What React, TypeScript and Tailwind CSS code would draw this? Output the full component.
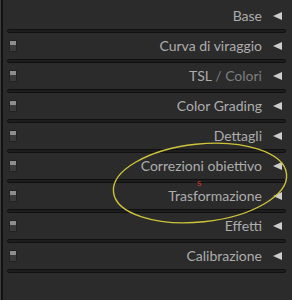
import type { ReactNode } from 'react';

type Panel = {
  label: ReactNode;
  toggle: boolean;
};

const PANELS: Panel[] = [
  { label: 'Base', toggle: false },
  { label: 'Curva di viraggio', toggle: true },
  {
    label: (
      <>
        TSL<span className="text-[#7e7e7e]"> / Colori</span>
      </>
    ),
    toggle: true,
  },
  { label: 'Color Grading', toggle: true },
  { label: 'Dettagli', toggle: true },
  { label: 'Correzioni obiettivo', toggle: true },
  { label: 'Trasformazione', toggle: true },
  { label: 'Effetti', toggle: true },
  { label: 'Calibrazione', toggle: true },
];

function Toggle() {
  return (
    <div className="flex h-[12px] w-[8px] flex-col overflow-hidden rounded-[1px] border border-[#222] bg-[#3b3b3b]">
      <div className="h-[4px] bg-[#8e8e8e]" />
    </div>
  );
}

function Collapse() {
  return (
    <svg width="9" height="8" viewBox="0 0 9 8" className="shrink-0">
      <path d="M0 4 L9 0 L9 8 Z" fill="#cdcdcd" />
    </svg>
  );
}

function PanelRow({ panel }: { panel: Panel }) {
  return (
    <div className="flex flex-col">
      <div className="flex h-[26px] items-center pl-[9px] pr-[10px]">
        {panel.toggle ? <Toggle /> : null}
        <span className="ml-auto mr-[11px] text-[14px] leading-none text-[#adadad]">{panel.label}</span>
        <Collapse />
      </div>
      <div className="ml-[7px] mr-[6px] h-[4px] rounded-[2px] border border-[#101010] bg-[#1e1e1e]" />
    </div>
  );
}

export default function App() {
  return (
    <div
      className="relative flex h-[300px] w-[292px] overflow-hidden bg-[#2b2b2b]"
      style={{ fontFamily: 'Lato, "Open Sans", sans-serif' }}
    >
      <div className="h-full w-[1px] bg-[#3d3d3d]" />
      <div className="h-full w-[2px] bg-[#121212]" />
      <div className="-ml-[3px] flex flex-1 flex-col pt-[3px]">
        {PANELS.map((p, i) => (
          <PanelRow key={i} panel={p} />
        ))}
      </div>

      {/* annotation drawn over the screenshot */}
      <svg className="pointer-events-none absolute left-0 top-0" width="292" height="300">
        <ellipse
          cx="200"
          cy="183"
          rx="87"
          ry="39"
          transform="rotate(-6 200 183)"
          fill="none"
          stroke="#cdc43a"
          strokeWidth="1.4"
        />
      </svg>
      <span className="absolute left-[197px] top-[177px] text-[10px] leading-none text-[#d63a2a]">s</span>
    </div>
  );
}
